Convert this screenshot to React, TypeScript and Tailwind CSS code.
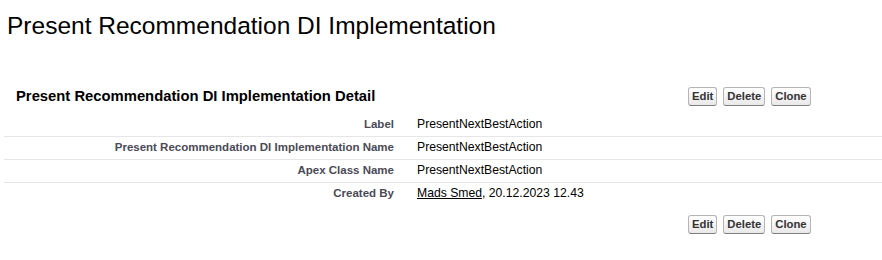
import React from "react";

const font = { fontFamily: '"Liberation Sans", Arial, sans-serif' };

function Btn({ children }: { children: React.ReactNode }) {
  return (
    <button className="h-[19px] px-[3px] text-[11.3px] leading-[13px] font-bold text-[#333] border border-[#b5b5b5] border-b-[#7f7f7f] rounded-[3px] bg-linear-to-b from-white to-[#e9e9e9]">
      {children}
    </button>
  );
}

function Buttons() {
  return (
    <div className="flex gap-[6px]">
      <Btn>Edit</Btn>
      <Btn>Delete</Btn>
      <Btn>Clone</Btn>
    </div>
  );
}

function Row({ label, children, last }: { label: string; children: React.ReactNode; last?: boolean }) {
  return (
    <div className={"flex pt-[3px] pb-[5px] " + (last ? "" : "border-b border-[#e6e6e6]")}>
      <div className="w-[390px] text-right text-[11.5px] leading-[14px] font-bold text-[#4a4a56]">{label}</div>
      <div className="pl-[23px] text-[12.2px] leading-[14px] text-black">{children}</div>
    </div>
  );
}

export default function App() {
  return (
    <div className="w-[882px] h-[260px] bg-white overflow-hidden" style={font}>
      <h1 className="pl-[7px] pt-[11px] text-[24.5px] leading-[29px] text-black font-normal">
        Present Recommendation DI Implementation
      </h1>
      <div className="ml-[4px] mt-[47px]">
        <div className="flex items-center h-[19px]">
          <div className="w-[684px] pl-[12px] text-[14.8px] font-bold text-black leading-[19px]">
            Present Recommendation DI Implementation Detail
          </div>
          <Buttons />
        </div>
        <div className="mt-[8px]">
          <Row label="Label">PresentNextBestAction</Row>
          <Row label="Present Recommendation DI Implementation Name">PresentNextBestAction</Row>
          <Row label="Apex Class Name">PresentNextBestAction</Row>
          <Row label="Created By" last>
            <span className="underline">Mads Smed</span>, 20.12.2023 12.43
          </Row>
        </div>
        <div className="flex mt-[10px]">
          <div className="w-[684px]" />
          <Buttons />
        </div>
      </div>
    </div>
  );
}
